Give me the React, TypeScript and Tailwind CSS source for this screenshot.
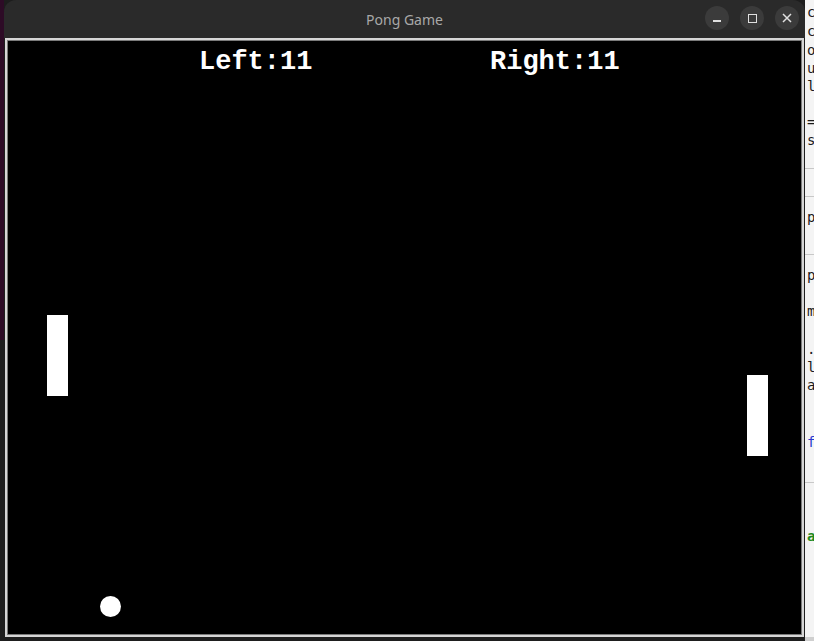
import React from "react";

const sideText: { top: number; ch: string; color: string }[] = [
  { top: 3, ch: "c", color: "text-[#1a1a1a]" },
  { top: 22, ch: "c", color: "text-[#1a1a1a]" },
  { top: 41, ch: "o", color: "text-[#1a1a1a]" },
  { top: 59, ch: "u", color: "text-[#1a1a1a]" },
  { top: 77, ch: "l", color: "text-[#1a1a1a]" },
  { top: 113, ch: "=", color: "text-[#1a1a1a]" },
  { top: 131, ch: "s", color: "text-[#1a1a1a]" },
  { top: 208, ch: "p", color: "text-[#1a1a1a]" },
  { top: 266, ch: "p", color: "text-[#1a1a1a]" },
  { top: 302, ch: "m", color: "text-[#1a1a1a]" },
  { top: 340, ch: ".", color: "text-[#1a1a1a]" },
  { top: 358, ch: "l", color: "text-[#1a1a1a]" },
  { top: 376, ch: "a", color: "text-[#1a1a1a]" },
  { top: 433, ch: "f", color: "text-[#2a3bd0]" },
  { top: 527, ch: "a", color: "text-[#1f8a1f] font-bold" },
];

function WinButton({ children }: { children: React.ReactNode }) {
  return (
    <div className="flex h-[24px] w-[24px] items-center justify-center rounded-full bg-[#3b3b3b]">
      {children}
    </div>
  );
}

export default function App() {
  return (
    <div className="flex h-[641px] w-[814px] overflow-hidden bg-[#1d1d1d]">
      {/* desktop on the left */}
      <div className="flex w-[4px] flex-col">
        <div className="h-[340px] bg-[#2d0b26]" />
        <div className="flex-1 bg-[#1f1f1f]" />
      </div>

      {/* window */}
      <div className="flex w-[801px] flex-col">
        <div className="relative flex h-[38px] items-center justify-center rounded-t-[12px] bg-[#2a2a2a]">
          <span className="text-[14px] text-[#a8a8a8] [font-family:'Noto_Sans',sans-serif]">
            Pong Game
          </span>
          <div className="absolute right-[6px] top-[6px] flex gap-[11px]">
            <WinButton>
              <div className="mt-[6px] h-[1.5px] w-[8px] bg-[#e0e0e0]" />
            </WinButton>
            <WinButton>
              <div className="h-[9px] w-[9px] border-[1.5px] border-[#e0e0e0]" />
            </WinButton>
            <WinButton>
              <svg width="10" height="10" viewBox="0 0 10 10">
                <path d="M1 1 L9 9 M9 1 L1 9" stroke="#e0e0e0" strokeWidth="1.5" />
              </svg>
            </WinButton>
          </div>
        </div>
        <div className="flex flex-1 bg-[#1e1e1e] pb-[4px] pl-[1px] pr-[1px]">
          <div className="flex flex-1 border-2 border-[#d6d6d6]">
            <div className="relative flex-1 border border-[#7a7a7a] bg-black">
              <div className="absolute left-0 right-0 top-[5px] font-bold text-white [font-family:'Liberation_Mono',monospace] text-[27px] leading-[32px]">
                <span className="absolute left-[191px]">Left:11</span>
                <span className="absolute left-[482px]">Right:11</span>
              </div>
              <div className="absolute left-[39px] top-[274px] h-[81px] w-[21px] bg-white" />
              <div className="absolute left-[739px] top-[334px] h-[81px] w-[21px] bg-white" />
              <div className="absolute left-[92px] top-[555px] h-[21px] w-[21px] rounded-full bg-white" />
            </div>
          </div>
        </div>
      </div>

      {/* neighbouring editor on the right */}
      <div className="relative w-[9px] overflow-hidden bg-[#f4f4f4] text-[14px] leading-[18px] [font-family:'DejaVu_Sans_Mono',monospace]">
        {sideText.map((t, i) => (
          <span key={i} className={`absolute left-[2px] ${t.color}`} style={{ top: t.top }}>
            {t.ch}
          </span>
        ))}
        <div className="absolute left-0 right-0 top-[168px] h-px bg-[#c8c8c8]" />
        <div className="absolute left-0 right-0 top-[196px] h-px bg-[#c8c8c8]" />
        <div className="absolute left-0 right-0 top-[254px] h-px bg-[#c8c8c8]" />
        <div className="absolute left-0 right-0 top-[482px] h-px bg-[#c8c8c8]" />
        <div className="absolute bottom-0 left-0 right-0 h-[4px] bg-[#cfcfcf]" />
      </div>
    </div>
  );
}
